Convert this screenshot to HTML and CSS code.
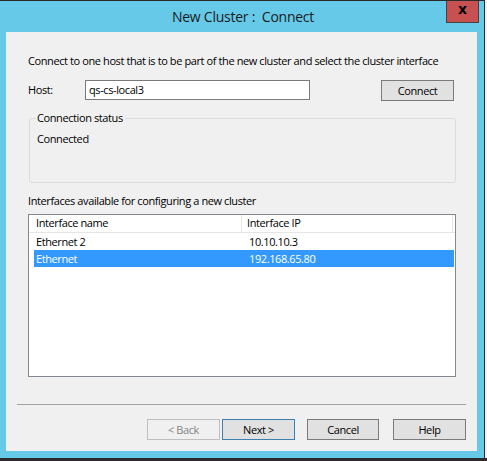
FILE: index.html
```html
<!DOCTYPE html>
<html>
<head>
<meta charset="utf-8">
<link rel="stylesheet" href="styles.css">
</head>
<body>
<div class="screen">
  <div class="window">
    <div class="titlebar">
      <div class="title">New Cluster :&nbsp; Connect</div>
      <div class="close">x</div>
    </div>
    <div class="content">
      <div class="intro">Connect to one host that is to be part of the new cluster and select the cluster interface</div>
      <div class="host-row">
        <span class="host-label">Host:</span>
        <div class="host-input">qs-cs-local3</div>
        <div class="btn connect-btn">Connect</div>
      </div>
      <fieldset class="status">
        <legend>Connection status</legend>
        <div class="status-text">Connected</div>
      </fieldset>
      <div class="list-label">Interfaces available for configuring a new cluster</div>
      <div class="list">
        <div class="list-head">
          <div class="col1">Interface name</div>
          <div class="col2">Interface IP</div>
        </div>
        <div class="row">
          <div class="col1">Ethernet 2</div>
          <div class="col2">10.10.10.3</div>
        </div>
        <div class="row selected">
          <div class="col1">Ethernet</div>
          <div class="col2">192.168.65.80</div>
        </div>
      </div>
      <div class="separator"></div>
      <div class="buttons">
        <div class="btn disabled">&lt; Back</div>
        <div class="btn default">Next &gt;</div>
        <div class="btn gap">Cancel</div>
        <div class="btn gap">Help</div>
      </div>
    </div>
  </div>
  <div class="outside"></div>
</div>
</body>
</html>
```

FILE: styles.css
```css
* { box-sizing: border-box; }
html, body { margin: 0; padding: 0; }
body {
  width: 487px;
  height: 461px;
  background: #2b2b2b;
  font-family: "Open Sans", "Noto Sans", sans-serif;
  font-size: 11px;
  letter-spacing: -0.4px;
  color: #000;
  overflow: hidden;
}
.screen { display: flex; height: 458px; }
.window {
  width: 485px;
  height: 458px;
  background: #66c9e8;
  border-top: 1px solid #2b2b2b;
  border-right: 1px solid #2b2b2b;
  display: flex;
  flex-direction: column;
}
.outside { flex: 1; background: #f0f0f0; }
.titlebar {
  position: relative;
  height: 31px;
  display: flex;
  align-items: center;
  justify-content: center;
}
.title {
  font-size: 14px;
  letter-spacing: -0.25px;
  color: #1b1b1b;
  margin-top: -1px;
  margin-left: 2px;
}
.close {
  position: absolute;
  left: 446px;
  top: 0;
  width: 33px;
  height: 22px;
  background: #c75050;
  border: 1px solid #444;
  border-top: none;
  color: #000;
  font-family: "DejaVu Sans", sans-serif;
  font-weight: bold;
  font-size: 14px;
  letter-spacing: 0;
  line-height: 17px;
  text-align: center;
}
.content {
  margin-left: 6px;
  width: 471px;
  height: 419px;
  background: #f0f0f0;
  padding: 21px 0 0 22px;
  display: flex;
  flex-direction: column;
}
.intro { line-height: 16px; height: 16px; white-space: nowrap; }
.host-row {
  margin-top: 11px;
  display: flex;
  align-items: flex-start;
  height: 21px;
}
.host-label { width: 57px; line-height: 20px; }
.host-input {
  width: 225px;
  height: 20px;
  background: #fff;
  border: 1px solid #7a7a7a;
  padding-left: 3px;
  line-height: 18px;
}
.btn {
  height: 21px;
  background: #e1e1e1;
  border: 1px solid #7a7a7a;
  text-align: center;
  line-height: 19px;
  width: 73px;
}
.connect-btn { margin-left: 71px; }
.status {
  margin: 10px 0 0 1px;
  width: 427px;
  height: 72px;
  border: 1px solid #dadde0;
  border-radius: 3px;
  padding: 0 0 0 7px;
  line-height: 16px;
  min-width: 0;
}
.status legend {
  padding: 0 2px 0 1px;
  margin-left: -1px;
  line-height: 14px;
}
.status-text { margin-top: 6px; }
.list-label { margin-top: 10px; line-height: 16px; }
.list {
  margin-top: 5px;
  width: 428px;
  height: 163px;
  border: 1px solid #828790;
  background: #fff;
}
.list-head {
  display: flex;
  height: 18px;
  line-height: 16px;
  border-bottom: 1px solid #e5e5e5;
}
.list-head .col1 {
  width: 213px;
  padding-left: 7px;
  border-right: 1px solid #e5e5e5;
}
.list-head .col2 {
  width: 211px;
  padding-left: 5px;
  border-right: 1px solid #e5e5e5;
}
.row {
  display: flex;
  height: 17px;
  line-height: 17px;
  margin-left: 5px;
  width: 420px;
}
.row .col1 { width: 209px; padding-left: 2px; }
.row .col2 { padding-left: 6px; }
.row.selected { background: #3399ff; color: #fff; }
.separator {
  margin: 27px 0 0 -11px;
  width: 449px;
  height: 1px;
  background: #a0a0a0;
}
.buttons {
  display: flex;
  margin: 14px 0 0 119px;
}
.btn.disabled { background: #f0f0f0; border-color: #bfbfbf; color: #838383; }
.btn.default { margin-left: 2px; border-color: #3c7fb1; }
.btn.gap { margin-left: 12px; width: 72px; }
.btn.gap + .btn.gap { margin-left: 14px; width: 73px; }
```
